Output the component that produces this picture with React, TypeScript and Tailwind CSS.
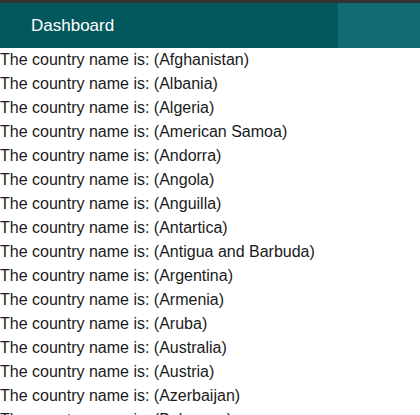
import React from "react";

const countries = [
  "Afghanistan",
  "Albania",
  "Algeria",
  "American Samoa",
  "Andorra",
  "Angola",
  "Anguilla",
  "Antartica",
  "Antigua and Barbuda",
  "Argentina",
  "Armenia",
  "Aruba",
  "Australia",
  "Austria",
  "Azerbaijan",
  "Bahamas",
  "Bahrain",
];

export default function App() {
  return (
    <div className="w-[420px] h-[415px] overflow-hidden bg-white" style={{ fontFamily: '"Liberation Sans", Arial, sans-serif' }}>
      <div className="h-[3px] bg-[#333333]" />
      <div className="flex h-[45px]">
        <div className="w-[338px] bg-[#03585e] flex items-center pl-[31px]">
          <span className="text-white text-[17px]">Dashboard</span>
        </div>
        <div className="flex-1 bg-[#116b70]" />
      </div>
      <div>
        {countries.map((c) => (
          <div key={c} className="text-[16px] leading-[24px] text-[#1a1a1a]">
            The country name is: ({c})
          </div>
        ))}
      </div>
    </div>
  );
}
